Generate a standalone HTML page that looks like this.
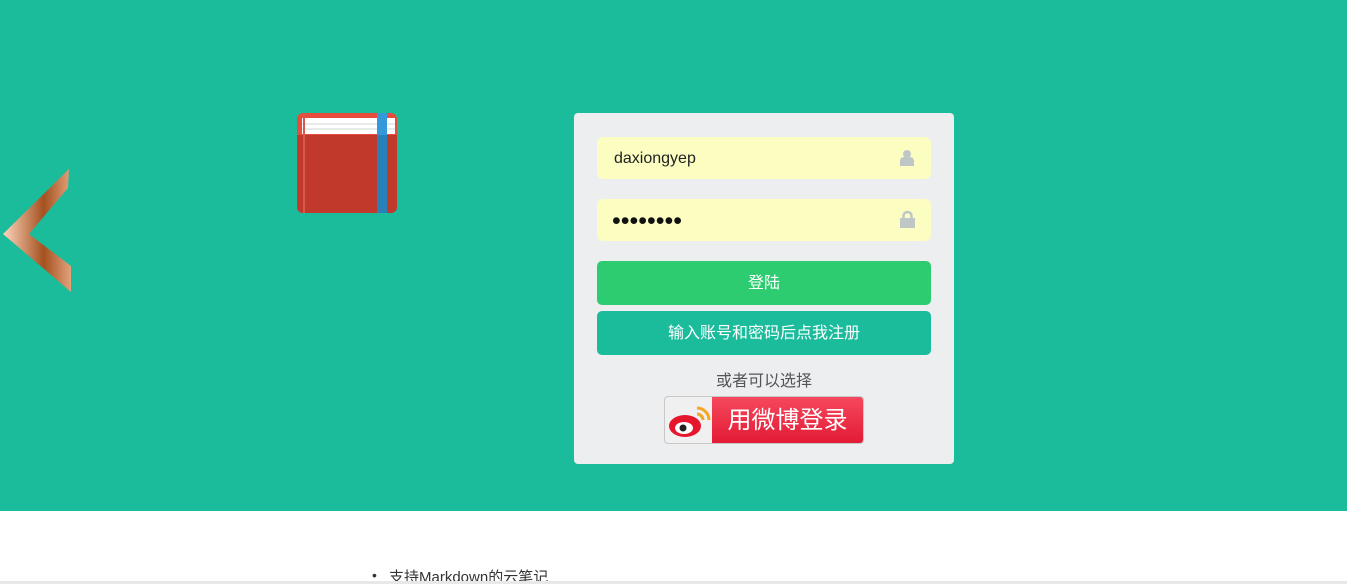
<!DOCTYPE html>
<html><head><meta charset="utf-8"><style>
body{margin:0;width:1347px;height:584px;overflow:hidden;background:#fff;font-family:"Liberation Sans","Noto Sans CJK SC",sans-serif;position:relative}
.top{position:absolute;left:0;top:0;width:1347px;height:511px;background:#1abc9c}
.panel{position:absolute;left:574px;top:113px;width:380px;height:351px;background:#eceef0;border-radius:4px}
.inp{position:absolute;left:23px;width:334px;height:42px;background:#fbfec0;border-radius:6px}
.btn{position:absolute;left:23px;width:334px;border-radius:5px;color:#fff;font-size:16px;text-align:center}
</style></head><body>
<div class="top"></div>
<svg style="position:absolute;left:0;top:160px" width="80" height="140">
<defs><linearGradient id="g" x1="0" x2="1"><stop offset="0" stop-color="#fbd6bd"/><stop offset="0.6" stop-color="#a5511f"/><stop offset="1" stop-color="#e2a27c"/></linearGradient></defs>
<polygon points="3,74 69,9 68,28 29,74 71,106 71,132" fill="url(#g)"/></svg>
<svg style="position:absolute;left:297px;top:113px" width="100" height="100">
<rect x="0" y="0" width="100" height="100" rx="6" fill="#e74c3c"/>
<rect x="5" y="5" width="93" height="16" fill="#fff"/>
<rect x="5" y="10" width="93" height="2" fill="#e6eaea"/>
<rect x="5" y="15" width="93" height="2" fill="#e6eaea"/>
<path d="M0 22 H100 V94 a6 6 0 0 1 -6 6 H6 a6 6 0 0 1 -6 -6Z" fill="#c0392b"/>
<rect x="6" y="0" width="2" height="100" fill="#d65a4c"/>
<rect x="80" y="0" width="10" height="100" fill="#3498db"/>
<rect x="80" y="22" width="10" height="78" fill="#2a80b9"/>
</svg>
<div class="panel">
<div class="inp" style="top:24px"><span style="position:absolute;left:17px;top:13px;font-size:16px;color:#222">daxiongyep</span>
<svg style="position:absolute;right:16px;top:12px" width="16" height="17"><circle cx="8" cy="5" r="4" fill="#bfc7c6"/><path d="M1 17 V12 a4 4 0 0 1 4-4 h6 a4 4 0 0 1 4 4 V17Z" fill="#bfc7c6"/></svg></div>
<div class="inp" style="top:86px"><span style="position:absolute;left:15px;top:8px;font-size:25px;letter-spacing:0px;color:#111">••••••••</span>
<svg style="position:absolute;right:16px;top:11px" width="15" height="18"><path d="M3.5 9 V6 a4 4 0 0 1 8 0 V9" stroke="#bfc7c6" stroke-width="2.5" fill="none"/><rect x="0" y="8" width="15" height="10" fill="#bfc7c6"/></svg></div>
<div class="btn" style="top:148px;height:44px;line-height:46px;background:#2ecc71">登陆</div>
<div class="btn" style="top:198px;height:44px;line-height:46px;background:#1abc9c">输入账号和密码后点我注册</div>
<div style="position:absolute;left:0;width:380px;top:254px;text-align:center;font-size:16px;color:#555">或者可以选择</div>
<div style="position:absolute;left:90px;top:283px;width:198px;height:46px;border:1px solid #c8c8c8;border-radius:4px;overflow:hidden;background:#f0f0f0">
<div style="position:absolute;left:47px;top:0;right:0;bottom:0;background:linear-gradient(#f6485e,#e21b34);color:#fff;font-size:24px;line-height:48px;text-align:center">用微博登录</div>
<svg style="position:absolute;left:2px;top:5px" width="48" height="38"><ellipse cx="18" cy="24" rx="16" ry="11" fill="#e6162d"/><ellipse cx="17" cy="26" rx="9" ry="6" fill="#fff"/><circle cx="16" cy="26" r="3.5" fill="#222"/><path d="M30 6 a12 12 0 0 1 12 12" stroke="#f5a623" stroke-width="3" fill="none"/><path d="M30 12 a6 6 0 0 1 6 6" stroke="#f5a623" stroke-width="3" fill="none"/></svg>
</div>
</div>
<div style="position:absolute;left:372px;top:567px;font-size:14px;color:#333">•</div>
<div style="position:absolute;left:389px;top:566px;font-size:15px;color:#333">支持Markdown的云笔记</div>
<div style="position:absolute;left:0;top:581px;width:1347px;height:3px;background:#e8e8e8"></div>
</body></html>
